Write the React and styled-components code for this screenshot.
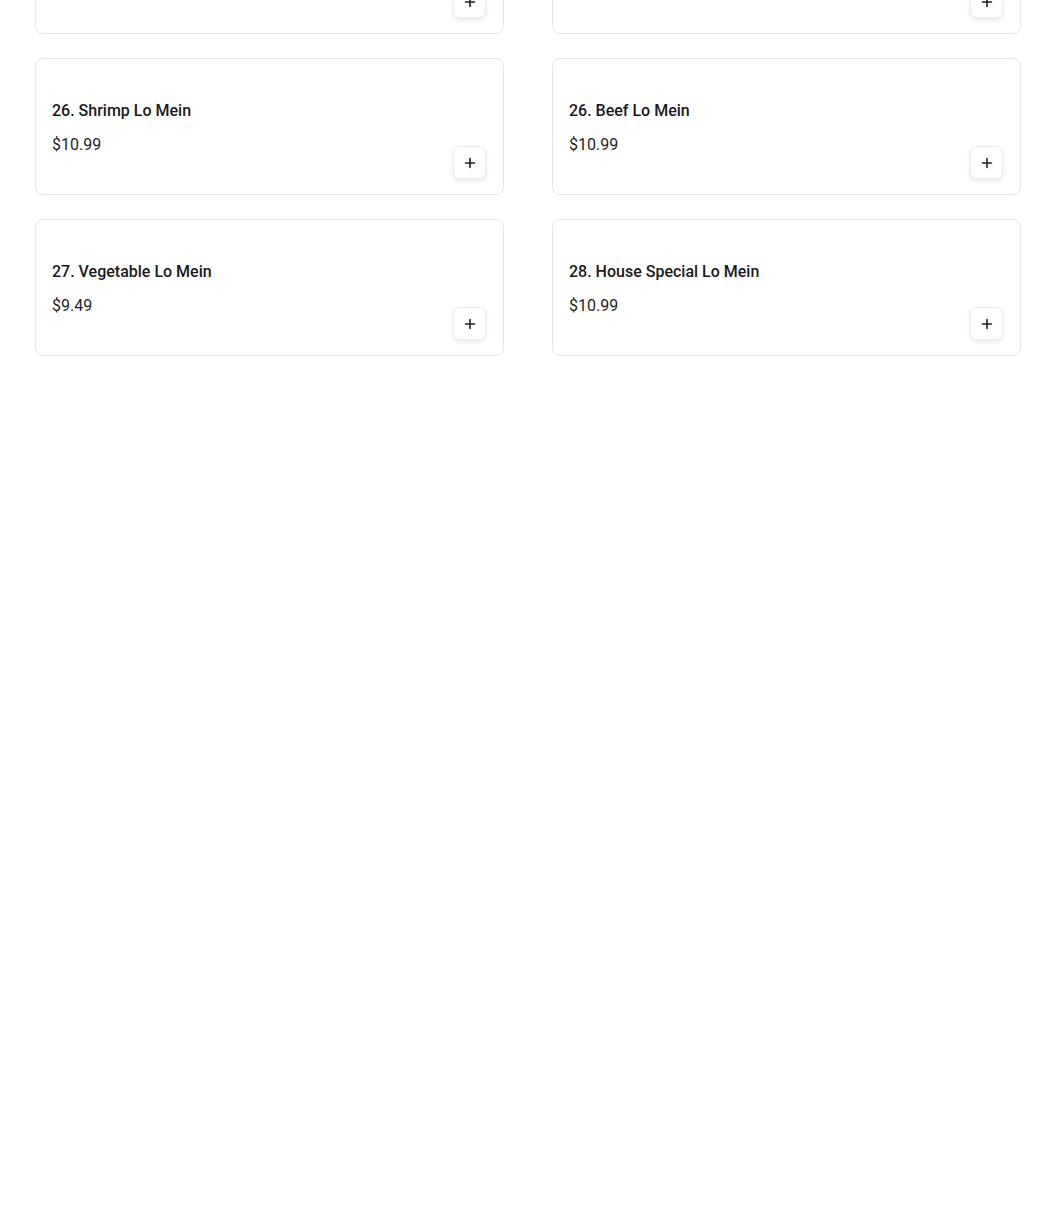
import styled, { createGlobalStyle } from 'styled-components';

const GlobalStyle = createGlobalStyle`
  html, body {
    margin: 0;
    padding: 0;
    background: #ffffff;
    font-family: Roboto, 'Liberation Sans', sans-serif;
    color: #1f1f1f;
  }
`;

const items = [
  { name: '25. Chicken Lo Mein', price: '$10.49' },
  { name: '25. Pork Lo Mein', price: '$10.49' },
  { name: '26. Shrimp Lo Mein', price: '$10.99' },
  { name: '26. Beef Lo Mein', price: '$10.99' },
  { name: '27. Vegetable Lo Mein', price: '$9.49' },
  { name: '28. House Special Lo Mein', price: '$10.99' },
];

const PlusIcon = () => (
  <svg width='12' height='12' viewBox='0 0 12 12' fill='none'>
    <path d='M6 1.5v9M1.5 6h9' stroke='#222' strokeWidth='1.6' strokeLinecap='round' />
  </svg>
);

const App = () => {
  return (
    <>
      <GlobalStyle />
      <Grid>
        {items.map((item) => (
          <Card key={item.name}>
            <Info>
              <Title>{item.name}</Title>
              <Price>{item.price}</Price>
            </Info>
            <AddButton aria-label='Add'>
              <PlusIcon />
            </AddButton>
          </Card>
        ))}
      </Grid>
    </>
  );
};

export default App;

const Grid = styled.div`
  display: grid;
  grid-template-columns: 469px 469px;
  column-gap: 48px;
  row-gap: 24px;
  margin-top: -103px;
  padding-left: 35px;
`;

const Card = styled.div`
  box-sizing: border-box;
  height: 137px;
  border: 1px solid #e6e6e6;
  border-radius: 8px;
  background: #fff;
  display: flex;
  justify-content: space-between;
  align-items: flex-end;
  padding: 0 17px 15px 16px;
`;

const Info = styled.div`
  display: flex;
  flex-direction: column;
  align-self: flex-start;
  padding-top: 40px;
`;

const Title = styled.div`
  font-size: 16px;
  font-weight: 500;
  line-height: 24px;
  color: #1a1a1a;
`;

const Price = styled.div`
  margin-top: 10px;
  font-size: 16px;
  line-height: 24px;
  color: #1f1f1f;
`;

const AddButton = styled.button`
  width: 33px;
  height: 33px;
  border: 1px solid #ececec;
  border-radius: 6px;
  background: #fff;
  box-shadow: 0 2px 4px rgba(0, 0, 0, 0.1);
  display: flex;
  align-items: center;
  justify-content: center;
  padding: 0;
  cursor: pointer;
`;
